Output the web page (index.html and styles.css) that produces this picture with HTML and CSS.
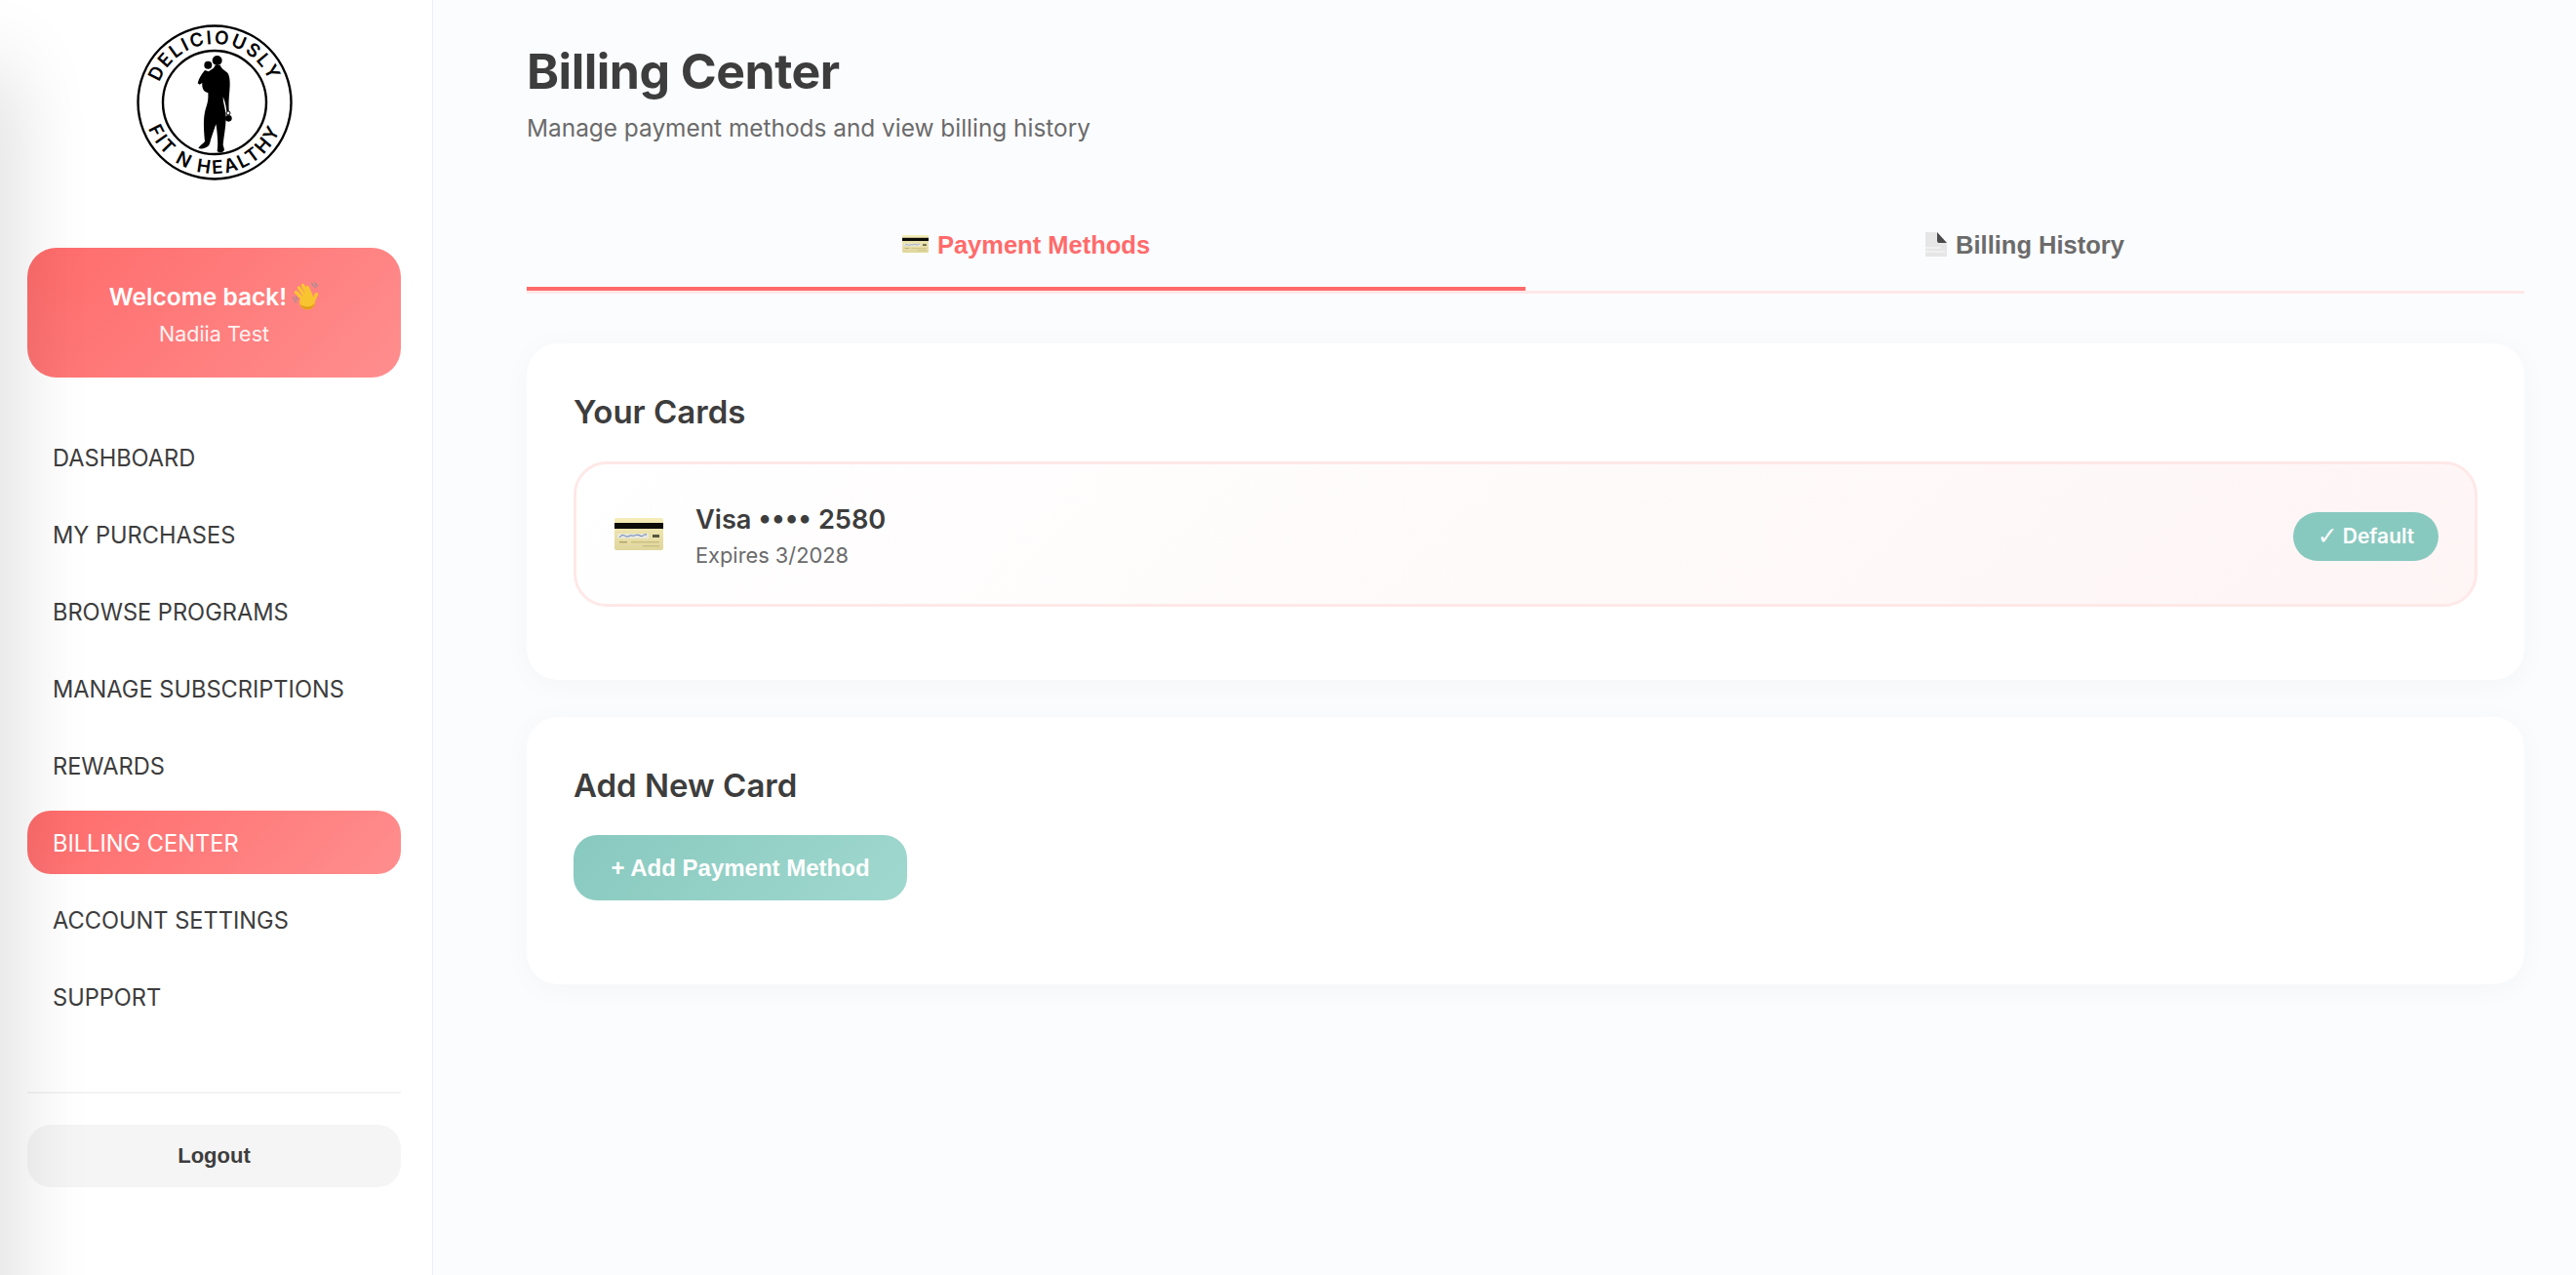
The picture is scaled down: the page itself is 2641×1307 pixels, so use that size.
FILE: index.html
```html
<!DOCTYPE html>
<html lang="en">
<head>
<meta charset="utf-8">
<title>Billing Center</title>
<link rel="stylesheet" href="styles.css">
</head>
<body>
<svg class="defs" width="0" height="0" aria-hidden="true">
  <defs>
    <linearGradient id="gold" x1="0" y1="0" x2="0" y2="1">
      <stop offset="0" stop-color="#f5edb8"/>
      <stop offset="1" stop-color="#e0d59c"/>
    </linearGradient>
    <symbol id="card-emoji" viewBox="0 0 50 33">
      <rect x="0" y="0" width="50" height="33" rx="2" fill="url(#gold)"/>
      <rect x="0" y="5" width="50" height="6" fill="#0b0b08"/>
      <rect x="3" y="16" width="32" height="5" fill="#e8e8dc"/>
      <path d="M5 20c3-4 5-2 7-1s4-2 6-1 5-2 8 0 4-2 7-1" fill="none" stroke="#5a78b8" stroke-width="1"/>
      <rect x="39" y="17" width="7" height="3" fill="#55553f"/>
      <rect x="5" y="24" width="8" height="1.4" fill="#a9a26a"/>
      <rect x="17" y="24" width="29" height="1.4" fill="#c9bf80"/>
      <rect x="29" y="28" width="17" height="1.4" fill="#c9bf80"/>
    </symbol>
    <symbol id="doc-emoji" viewBox="0 0 22 25">
      <path d="M0 0h12l10 11v14H0z" fill="#e6e6e6"/>
      <path d="M12 0l10 11h-8q-2 0-2-2z" fill="#4a4a4a"/>
      <path d="M0 16h16M0 20h20" stroke="#f3f3f3" stroke-width="1.5"/>
    </symbol>
  </defs>
</svg>
<div class="app">
  <aside class="sidebar">
    <div class="edge-shade" aria-hidden="true"></div>
    <div class="logo-wrap">
      <svg class="logo" viewBox="0 0 160 160" role="img" aria-label="Deliciously Fit N Healthy">
        <defs>
          <path id="arc-top" d="M20 80a60 60 0 0 1 120 0"/>
          <path id="arc-bottom" d="M7 80a73 73 0 0 0 146 0"/>
        </defs>
        <circle cx="80" cy="80" r="78.5" class="logo-ring"/>
        <circle cx="80" cy="80" r="53" class="logo-ring"/>
        <text class="logo-text logo-text-top"><textPath href="#arc-top" startOffset="50%" text-anchor="middle">DELICIOUSLY</textPath></text>
        <text class="logo-text logo-text-bottom"><textPath href="#arc-bottom" startOffset="50%" text-anchor="middle">FIT N HEALTHY</textPath></text>
        <g transform="translate(50 25) scale(.3333)">
          <circle cx="98" cy="36" r="15"/>
          <circle cx="70" cy="50" r="12"/>
          <path d="M72 70C80 62 88 62 92 50L108 50C110 62 122 66 130 74C138 84 138 110 136 130C134 150 133 170 134 192L127 192C125 170 120 158 116 148C116 170 126 190 125 215C124 245 118 270 116 295C118 305 122 310 118 315C112 320 102 320 98 314C100 300 100 290 99 275C98 260 97 245 94 232C90 245 84 262 78 280C76 290 74 295 72 298C65 305 50 310 40 306C44 298 55 292 60 285C58 260 54 225 60 195C64 175 72 165 70 135C60 135 50 125 52 105L44 110L38 106C42 90 50 78 60 66Z"/>
          <circle cx="133" cy="214" r="10"/>
          <circle cx="132" cy="198" r="6" fill="none" stroke="#000" stroke-width="3"/>
        </g>
      </svg>
    </div>
    <div class="welcome">
      <div class="welcome-title">
        <span>Welcome back!</span>
        <svg class="wave" viewBox="0 0 28 30" aria-hidden="true">
          <path d="M20.500 1.500l4 4M24 1l2.500 3M1.500 16l3 5M4 15l2 3.500" fill="none" stroke="#a08d96" stroke-width="1.300" stroke-linecap="round"/>
          <g fill="none" stroke="#f8c530" stroke-width="3.400" stroke-linecap="round">
            <path d="M12 18L4.500 10.500"/>
            <path d="M14 15L7.500 6"/>
            <path d="M17 14L11.500 3.500"/>
            <path d="M20 14L16 5.500"/>
            <path d="M22 20L25.500 12.500"/>
          </g>
          <circle cx="16" cy="20.500" r="8" fill="#f8c530"/>
          <path d="M8.500 23c2 5 7 6 10.500 4.800 3-1 4.800-4 5-6.800-2 4-8.500 6.500-15.500 2z" fill="#e39c1a"/>
        </svg>
      </div>
      <div class="welcome-name">Nadiia Test</div>
    </div>
    <nav class="nav">
      <a class="nav-item">DASHBOARD</a>
      <a class="nav-item">MY PURCHASES</a>
      <a class="nav-item">BROWSE PROGRAMS</a>
      <a class="nav-item">MANAGE SUBSCRIPTIONS</a>
      <a class="nav-item">REWARDS</a>
      <a class="nav-item nav-item-active">BILLING CENTER</a>
      <a class="nav-item">ACCOUNT SETTINGS</a>
      <a class="nav-item">SUPPORT</a>
    </nav>
    <div class="sidebar-foot">
      <button class="logout" type="button">Logout</button>
    </div>
  </aside>
  <main class="main">
    <h1 class="page-title">Billing Center</h1>
    <p class="page-sub">Manage payment methods and view billing history</p>
    <div class="tabs">
      <button class="tab tab-active" type="button"><svg class="tab-card"><use href="#card-emoji"/></svg><span>Payment Methods</span></button>
      <button class="tab" type="button"><svg class="tab-doc"><use href="#doc-emoji"/></svg><span>Billing History</span></button>
    </div>
    <section class="panel panel-cards">
      <h2 class="panel-title">Your Cards</h2>
      <div class="pay-card">
        <svg class="pay-icon"><use href="#card-emoji"/></svg>
        <div class="pay-info">
          <div class="pay-name">Visa •••• 2580</div>
          <div class="pay-exp">Expires 3/2028</div>
        </div>
        <span class="badge"><span class="badge-check">✓</span> Default</span>
      </div>
    </section>
    <section class="panel panel-add">
      <h2 class="panel-title">Add New Card</h2>
      <button class="add-btn" type="button">+ Add Payment Method</button>
    </section>
  </main>
</div>
</body>
</html>
```
FILE: styles.css
```css
* { box-sizing: border-box; }
html, body { margin: 0; height: 100%; }
body {
  font-family: Inter, "Liberation Sans", sans-serif;
  color: #3d3d3d;
  background: #fbfcfe;
  overflow: hidden;
}
.defs { position: absolute; }
.app { display: flex; height: 100vh; }

.sidebar {
  position: relative;
  flex: 0 0 444px;
  padding: 25px 32px 0 28px;
  background: #fff;
  border-right: 1px solid #e9eff5;
  overflow: hidden;
}
.edge-shade {
  position: absolute;
  z-index: 3;
  left: -40px;
  top: 70px;
  bottom: -120px;
  width: 40px;
  box-shadow: 0 0 85px rgba(0, 0, 0, .24);
  pointer-events: none;
}
.logo-wrap { display: flex; justify-content: center; }
.logo { display: block; width: 160px; height: 160px; }
.logo-ring { fill: none; stroke: #000; stroke-width: 2.400; }
.logo-text {
  font-family: Inter, sans-serif;
  font-size: 19px;
  font-weight: 600;
  fill: #000;
}
.logo-text-top { letter-spacing: 2px; }
.logo-text-bottom { letter-spacing: 2.500px; }
.welcome {
  margin-top: 69px;
  height: 133px;
  padding-top: 35px;
  border-radius: 30px;
  background: linear-gradient(135deg, #ff6b6b, #ff8e8e);
  color: #fff;
  text-align: center;
}
.welcome-title {
  display: flex;
  justify-content: center;
  align-items: center;
  gap: 5px;
  height: 30px;
  font-size: 24.500px;
  font-weight: 600;
}
.wave { width: 28px; height: 30px; }
.welcome-name {
  margin-top: 8px;
  font-size: 21.500px;
  line-height: 30px;
  opacity: .9;
}
.nav {
  display: flex;
  flex-direction: column;
  gap: 14.130px;
  margin-top: 48px;
}
.nav-item {
  display: flex;
  align-items: center;
  height: 65px;
  padding: 3px 0 0 26px;
  border-radius: 24px;
  font-size: 23.600px;
  font-weight: 400;
  color: #3d3d3d;
}
.nav-item-active {
  background: linear-gradient(135deg, #ff6b6b, #ff8e8e);
  color: #fff;
}
.sidebar-foot {
  margin-top: 65px;
  padding-top: 32px;
  border-top: 2px solid #f3f3f3;
}
.logout {
  display: block;
  width: 100%;
  height: 64px;
  border: 0;
  border-radius: 24px;
  background: #f5f5f5;
  font-family: "Liberation Sans", Arial, sans-serif;
  font-size: 22px;
  font-weight: 700;
  color: #3d3d3d;
}

.main { flex: 1; padding: 0 53px 0 96px; min-width: 0; }
.page-title {
  margin: 44px 0 0;
  font-size: 50px;
  line-height: 58px;
  font-weight: 700;
  color: #3d3d3d;
  letter-spacing: -.5px;
}
.page-sub {
  margin: 12px 0 0;
  font-size: 24.400px;
  line-height: 34px;
  color: #6b6b6b;
}
.tabs {
  display: flex;
  margin-top: 54px;
  border-bottom: 3px solid #ffe8e8;
}
.tab {
  flex: 1;
  display: flex;
  justify-content: center;
  align-items: center;
  gap: 9px;
  height: 96px;
  padding: 6px 0 0;
  border: 0;
  border-bottom: 4px solid transparent;
  background: none;
  font-family: "Liberation Sans", Arial, sans-serif;
  font-size: 25.500px;
  font-weight: 700;
  color: #6b6b6b;
}
.tab-active { color: #ff6b6b; border-bottom-color: #ff6b6b; }
.tab-card { width: 27px; height: 18px; margin-bottom: 2px; }
.tab-doc { width: 22px; height: 25px; margin-bottom: 2px; }

.panel {
  padding: 49px 48px 48px;
  border-radius: 32px;
  background: #fff;
  box-shadow: 0 4px 30px rgba(0, 0, 0, .03);
}
.panel-cards { margin-top: 51px; height: 345px; }
.panel-add { margin-top: 38px; height: 274px; }
.panel-title {
  margin: 0;
  font-size: 33px;
  line-height: 42px;
  font-weight: 600;
  color: #3d3d3d;
}
.pay-card {
  display: flex;
  align-items: center;
  height: 149px;
  margin-top: 30px;
  padding: 0 37px 0 39px;
  border: 3px solid #ffe8e8;
  border-radius: 34px;
  background: linear-gradient(135deg, #fff, #fef5f5);
}
.pay-icon { flex: none; width: 50px; height: 33px; margin-right: 33px; }
.pay-info { flex: 1; padding-top: 4px; }
.pay-name { font-size: 27.200px; line-height: 36px; font-weight: 600; }
.pay-exp { font-size: 21.800px; line-height: 30px; margin-top: 3px; color: #6b6b6b; }
.badge {
  display: flex;
  align-items: center;
  justify-content: center;
  gap: 5px;
  width: 149px;
  height: 50px;
  margin-top: 4px;
  border-radius: 25px;
  background: #88c9bf;
  color: #fff;
  font-size: 21px;
  font-weight: 600;
}
.badge-check { font-family: "DejaVu Sans", sans-serif; font-size: 25px; line-height: 1; font-weight: 400; }
.add-btn {
  display: block;
  width: 342px;
  height: 67px;
  margin-top: 30px;
  border: 0;
  border-radius: 24px;
  background: linear-gradient(135deg, #88c9bf, #a0d8ce);
  color: #fff;
  font-family: "Liberation Sans", Arial, sans-serif;
  font-size: 24px;
  font-weight: 700;
}
```
